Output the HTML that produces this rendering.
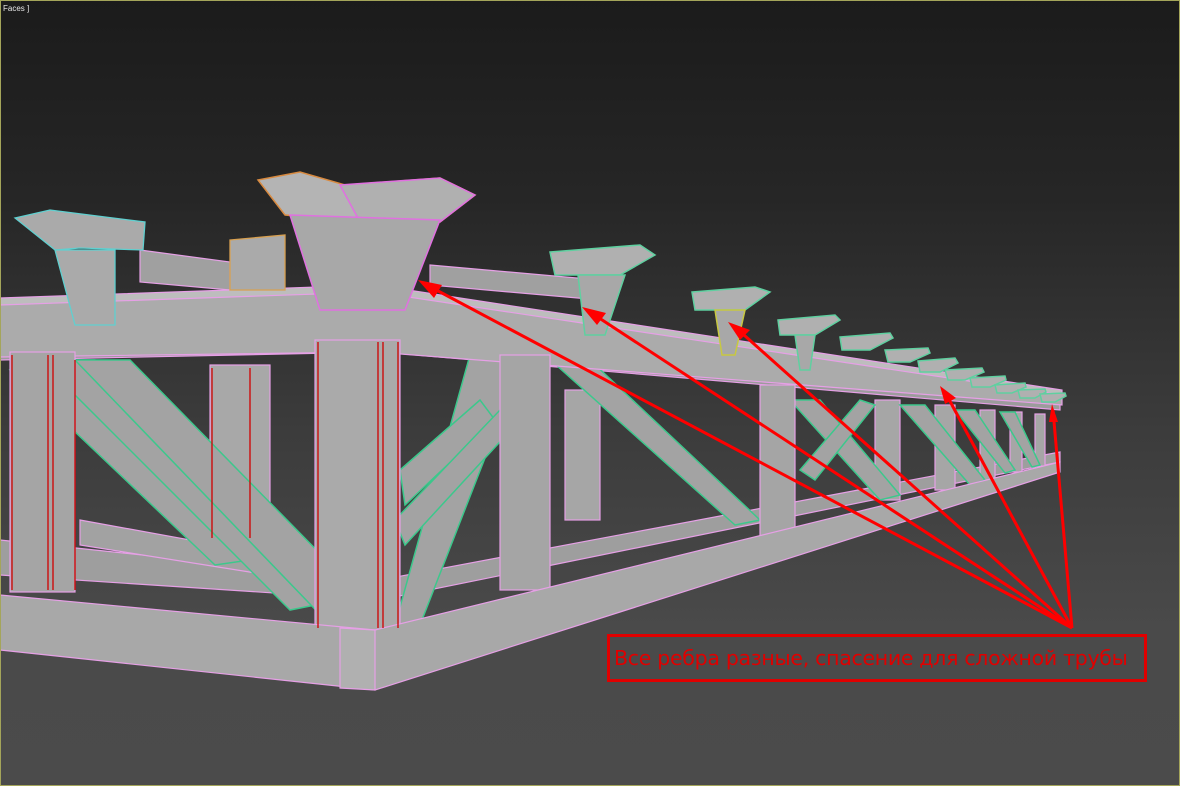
<!DOCTYPE html>
<html><head><meta charset="utf-8"><style>
html,body{margin:0;padding:0}
body{width:1180px;height:786px;overflow:hidden;background:linear-gradient(180deg,#1b1b1b 0%,#262626 25%,#3c3c3c 55%,#4a4a4a 80%,#4b4b4b 100%);position:relative;font-family:"Liberation Sans",sans-serif}
.frame{position:absolute;left:0;top:0;width:1178px;height:784px;border:1px solid #a4a55a}
.lbl{position:absolute;left:3px;top:4px;color:#e8e8e8;font-size:8px}
svg{position:absolute;left:0;top:0}
.box{position:absolute;left:607px;top:634px;width:530px;height:42px;border:3px solid #e00000;color:#e00000;font-family:"DejaVu Sans","Liberation Sans",sans-serif;font-size:20.5px;line-height:42px;padding-left:4px;box-sizing:content-box;white-space:nowrap;letter-spacing:-0.3px}
</style></head><body>
<svg width="1180" height="786" viewBox="0 0 1180 786">
<g stroke="#e6a0e6" stroke-width="1.2">
<!-- inner floor -->
<polygon points="0,540 380,580 1060,452 1060,462 380,600 0,575" fill="#9e9e9e"/>
<polygon points="80,520 300,560 300,580 80,545" fill="#a2a2a2"/>
<!-- back top rails -->
<polygon points="0,340 380,332 1060,402 1060,410 380,352 0,360" fill="#9c9c9c"/>
<polygon points="140,250 230,262 230,290 140,282" fill="#a0a0a0"/>
<polygon points="430,265 600,280 600,300 430,285" fill="#a0a0a0"/>
<!-- far columns -->
<rect x="565" y="390" width="35" height="130" fill="#a6a6a6"/>
<rect x="210" y="365" width="60" height="175" fill="#a8a8a8"/>
<rect x="875" y="400" width="25" height="100" fill="#a6a6a6"/>
<rect x="935" y="405" width="20" height="85" fill="#a6a6a6"/>
<rect x="980" y="410" width="15" height="70" fill="#a6a6a6"/>
<rect x="1010" y="412" width="12" height="60" fill="#a6a6a6"/>
<rect x="1035" y="414" width="10" height="52" fill="#a6a6a6"/>
</g>
<g stroke="#3cc88c" stroke-width="1.5" fill="#a3a3a3">
<polygon points="10,370 40,360 250,560 215,565"/>
<polygon points="40,360 95,360 340,600 290,610"/>
<polygon points="75,360 130,360 390,625 335,630"/>
<polygon points="470,355 525,355 420,625 395,625"/>
<polygon points="400,470 480,400 495,420 405,505"/>
<polygon points="545,355 590,360 760,520 735,525"/>
<polygon points="395,520 500,410 520,420 405,545"/>
<polygon points="790,400 820,400 900,495 880,500"/>
<polygon points="800,470 860,400 875,405 815,480"/>
<polygon points="900,405 925,405 985,480 970,485"/>
<polygon points="955,410 975,410 1015,470 1005,473"/>
<polygon points="1000,412 1015,412 1040,465 1032,467"/>
</g>
<g stroke="#e6a0e6" stroke-width="1.2">
<!-- top chord -->
<polygon points="0,303 375,288 1062,393 1062,405 375,352 0,357" fill="#ababab"/>
<polygon points="0,298 375,285 1062,390 1062,395 375,292 0,305" fill="#bdbdbd"/>
<!-- columns -->
<rect x="10" y="352" width="65" height="240" fill="#a5a5a5"/>
<rect x="500" y="355" width="50" height="235" fill="#a5a5a5"/>
<rect x="760" y="385" width="35" height="155" fill="#a5a5a5"/>
<rect x="315" y="340" width="85" height="290" fill="#aaaaaa"/>
<!-- bottom chord -->
<polygon points="0,595 375,630 1060,462 1060,472 375,690 0,650" fill="#a8a8a8"/>
<polygon points="340,628 375,630 375,690 340,688" fill="#b0b0b0"/>
</g>
<g stroke="#d00000" stroke-width="1.3">
<line x1="318" y1="342" x2="318" y2="628"/><line x1="378" y1="342" x2="378" y2="628"/><line x1="383" y1="342" x2="383" y2="628"/><line x1="398" y1="342" x2="398" y2="628"/>
<line x1="12" y1="355" x2="12" y2="590"/><line x1="48" y1="355" x2="48" y2="590"/><line x1="53" y1="355" x2="53" y2="590"/><line x1="75" y1="360" x2="75" y2="590"/>
<line x1="212" y1="368" x2="212" y2="538"/><line x1="250" y1="368" x2="250" y2="538"/>
</g>
<!-- brackets -->
<g stroke="#5fd0d0" stroke-width="1.3" fill="#aaaaaa">
<polygon points="15,218 50,210 145,222 143,250 80,248 55,250"/>
<polygon points="55,250 115,250 115,325 75,325"/>
<polygon points="230,240 285,235 285,290 230,290" stroke="#d8a050"/>
</g>
<g stroke="#e070e0" stroke-width="1.5">
<polygon points="258,180 300,172 345,185 440,178 475,195 440,222 360,222 285,215" fill="#b4b4b4" stroke="#d88a40"/>
<polygon points="340,185 440,178 475,195 440,222 360,222" fill="#b0b0b0"/>
<polygon points="290,215 440,220 405,310 320,310" fill="#a8a8a8"/>
<polygon points="550,252 640,245 655,255 620,275 555,275" fill="#b0b0b0" stroke="#5fd0a0"/>
<polygon points="578,275 625,275 605,335 585,335" fill="#a8a8a8" stroke="#5fd0a0"/>
<polygon points="692,292 755,287 770,292 745,310 695,310" fill="#b0b0b0" stroke="#5fd0a0"/>
<polygon points="715,310 745,310 735,355 722,355" fill="#a8a8a8" stroke="#c8c840"/>
<polygon points="778,320 835,315 840,320 815,335 780,335" fill="#b0b0b0" stroke="#5fd0a0"/>
<polygon points="795,335 815,335 810,370 800,370" fill="#a8a8a8" stroke="#5fd0a0"/>
<polygon points="840,337 890,333 893,338 870,350 842,350" fill="#b0b0b0" stroke="#5fd0a0"/>
<polygon points="885,350 928,348 930,353 910,362 888,362" fill="#b0b0b0" stroke="#5fd0a0"/>
<polygon points="918,361 955,358 958,363 940,372 920,372" fill="#b0b0b0" stroke="#5fd0a0"/>
<polygon points="945,370 982,368 984,372 965,380 948,380" fill="#b0b0b0" stroke="#5fd0a0"/>
<polygon points="970,378 1005,376 1006,380 990,387 972,387" fill="#b0b0b0" stroke="#5fd0a0"/>
<polygon points="995,385 1025,383 1026,387 1012,393 997,393" fill="#b0b0b0" stroke="#5fd0a0"/>
<polygon points="1018,390 1045,389 1046,392 1035,398 1020,398" fill="#b0b0b0" stroke="#5fd0a0"/>
<polygon points="1040,394 1065,393 1066,396 1055,402 1042,402" fill="#b0b0b0" stroke="#5fd0a0"/>
</g>
<!-- arrows -->
<g stroke="#ff0000" stroke-width="3" fill="#ff0000">
<line x1="1072" y1="628" x2="425" y2="284"/>
<line x1="1072" y1="628" x2="590" y2="312"/>
<line x1="1072" y1="628" x2="735" y2="327"/>
<line x1="1072" y1="628" x2="945" y2="392"/>
<line x1="1072" y1="628" x2="1053" y2="410"/>
<polygon points="418,280 442,285 434,298" stroke="none"/>
<polygon points="582,307 606,313 597,325" stroke="none"/>
<polygon points="728,322 750,330 740,340" stroke="none"/>
<polygon points="940,386 956,398 945,404" stroke="none"/>
<polygon points="1052,404 1058,422 1049,422" stroke="none"/>
</g>
</svg>
<div class="frame"></div>
<div class="lbl">Faces ]</div>
<div class="box">Все ребра разные, спасение для сложной трубы</div>
</body></html>
